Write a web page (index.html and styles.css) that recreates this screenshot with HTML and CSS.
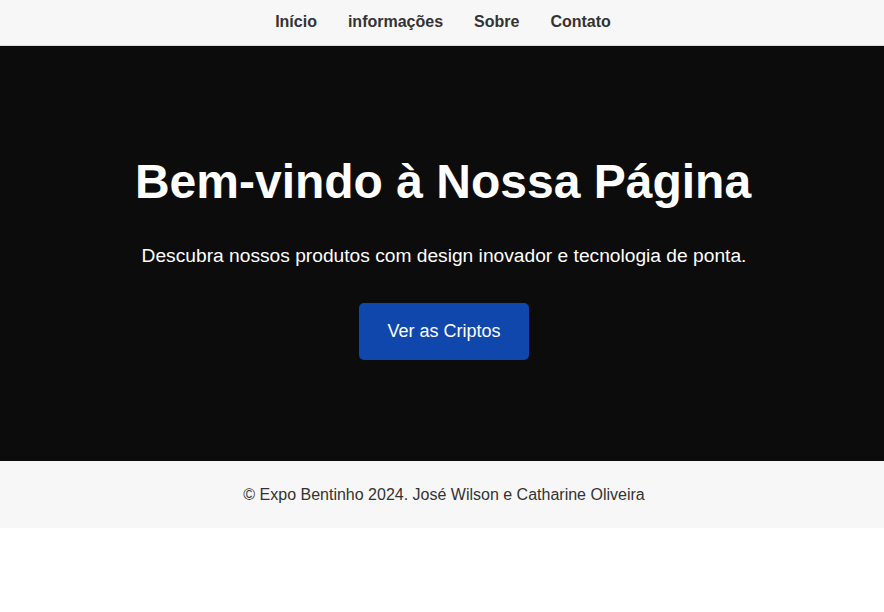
FILE: index.html
```html
<!DOCTYPE html>
<html lang="pt-BR">
<head>
<meta charset="utf-8">
<title>Expo Bentinho</title>
<link rel="stylesheet" href="styles.css">
</head>
<body>
<header class="topbar">
  <nav class="nav">
    <a href="#">Início</a>
    <a href="#">informações</a>
    <a href="#">Sobre</a>
    <a href="#">Contato</a>
  </nav>
</header>
<section class="hero">
  <h1 class="hero-title">Bem-vindo à Nossa Página</h1>
  <p class="hero-text">Descubra nossos produtos com design inovador e tecnologia de ponta.</p>
  <a class="hero-btn" href="#">Ver as Criptos</a>
</section>
<footer class="footer">
  <p>© Expo Bentinho 2024. José Wilson e Catharine Oliveira</p>
</footer>
</body>
</html>
```
FILE: styles.css
```css
* { box-sizing: border-box; }
html, body { margin: 0; padding: 0; background: #fff; }
body { font-family: "Liberation Sans", Arial, sans-serif; color: #333; }

.topbar {
  background: #f7f7f7;
  border-bottom: 1px solid #dcdcdc;
  height: 46px;
  display: flex;
  align-items: center;
  justify-content: center;
}
.nav { display: flex; gap: 31px; padding-left: 2px; margin-top: -2px; }
.nav a {
  color: #333;
  text-decoration: none;
  font-weight: bold;
  font-size: 16px;
}

.hero {
  background: #0c0c0c;
  color: #fff;
  height: 415px;
  display: flex;
  flex-direction: column;
  align-items: center;
  padding-top: 98px;
  text-align: center;
}
.hero-title {
  margin: 0;
  font-size: 48px;
  line-height: 76px;
  font-weight: bold;
  padding-left: 2px;
}
.hero-text {
  margin: 0;
  margin-top: 25px;
  font-size: 19.2px;
  line-height: 22px;
  padding-left: 4px;
}
.hero-btn {
  margin-top: 36px;
  margin-left: 4px;
  display: flex;
  align-items: center;
  justify-content: center;
  background: #0f47ad;
  color: #fff;
  text-decoration: none;
  font-size: 18px;
  white-space: nowrap;
  width: 170px;
  height: 57px;
  border-radius: 5px;
}

.footer {
  background: #f7f7f7;
  height: 67px;
  display: flex;
  align-items: center;
  justify-content: center;
}
.footer p { margin: 0; font-size: 16px; color: #333; padding-left: 4px; }
```
